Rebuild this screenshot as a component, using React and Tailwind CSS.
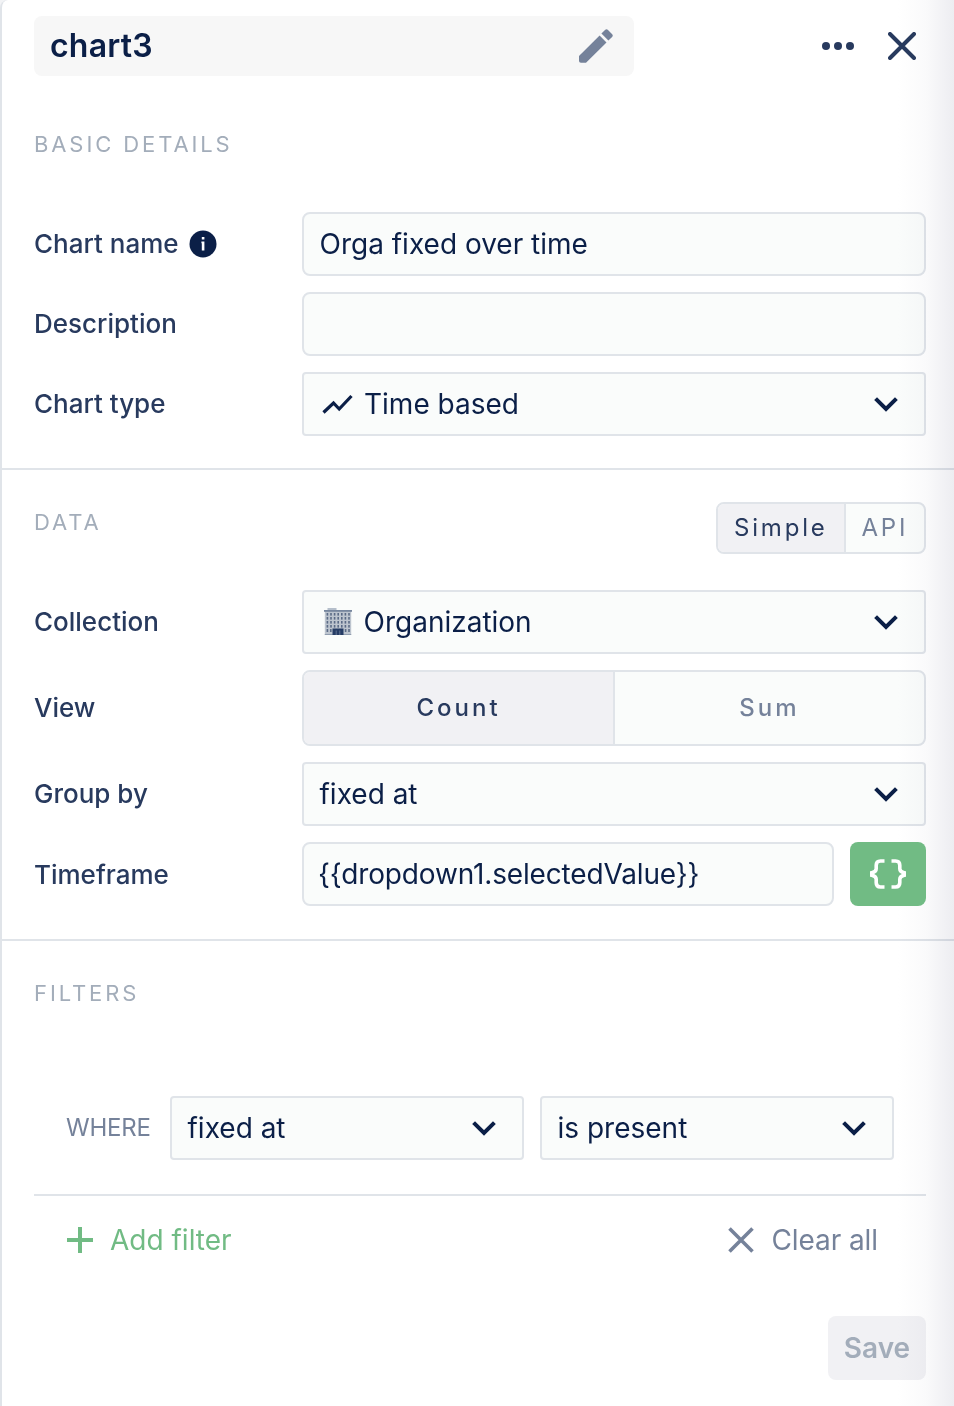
import React from "react";

const CONTROL = "border-2 border-[#e0e4e9] bg-[#fafcfb]";

function Chevron() {
  return (
    <svg className="h-[16px] w-[26px] shrink-0" viewBox="0 0 26 16" fill="none" stroke="#0b1f47" strokeWidth="4">
      <path d="M2.6 2.6 13 13 23.4 2.6" />
    </svg>
  );
}

function Select({ icon, children, className = "" }) {
  return (
    <div className={`flex h-16 items-center rounded-[4px] pl-[15.5px] pr-[25px] ${CONTROL} ${className}`}>
      {icon}
      <span className="flex-1 whitespace-nowrap">{children}</span>
      <Chevron />
    </div>
  );
}

function Row({ label, info, height = "h-16", labelClass = "pb-px", children }) {
  return (
    <div className={`flex items-center ${height}`}>
      <div className={`flex w-[268px] shrink-0 items-center text-[26px] font-medium text-[#283a5e] ${labelClass}`}>
        {label}
        {info}
      </div>
      <div className="flex flex-1 text-[28px] text-[#0b1f47]">{children}</div>
    </div>
  );
}

function Heading({ children }) {
  return <h2 className="h-[32px] text-[22px] leading-[32px] tracking-[2.9px] text-[#a3adba]">{children}</h2>;
}

function InfoIcon() {
  return (
    <svg className="relative top-[0.5px] ml-[10.5px] h-[28px] w-[28px]" viewBox="0 0 28 28">
      <circle cx="14" cy="14" r="13.5" fill="#0b1f47" />
      <path d="M12.8 7h2.6v2.4h-2.6zM12.4 11.6h3v9h-2.6v-7.4h-.4z" fill="#fff" />
    </svg>
  );
}

function TrendIcon() {
  return (
    <svg className="mr-[10px] ml-[2.5px] h-[20px] w-[32px]" viewBox="0 0 32 20" fill="none" stroke="#0b1f47" strokeWidth="3.2">
      <path d="M1.5 18.5 11.5 9 17.2 15 29.5 2" />
    </svg>
  );
}

function BuildingIcon() {
  const floors = [5, 9, 13, 17];
  const columns = [2.6, 6.2, 9.8, 13.4, 17, 20.6, 24.2];
  return (
    <svg className="mr-[11.5px] ml-[4.5px] h-[28px] w-[28px]" viewBox="0 0 28 28">
      <path d="M3.5 0h9v3h-9z" fill="#b5bfcb" />
      <path d="M.8 3h26.4v24H.8z" fill="#bcc4ce" />
      <path d="M0 2h28v1.8H0z" fill="#76869e" />
      <path d="M.8 26h26.4v1H.8z" fill="#909daf" />
      {floors.map((y) =>
        columns.map((x) => <rect key={`${x}-${y}`} x={x} y={y} width="1.6" height="2.6" fill="#5b6b86" />)
      )}
      <path d="M2.6 21h1.6v3H2.6zM24.2 21h1.6v3h-1.6zM6 21h1.6v3H6zM20.8 21h1.6v3h-1.6z" fill="#5b6b86" />
      <path d="M8.5 20.5h11v6.5h-11z" fill="#253c65" />
      <path d="M12.2 22.5v4.5M15.8 22.5v4.5" stroke="#71829e" strokeWidth=".8" />
    </svg>
  );
}

function BracesIcon() {
  return (
    <svg className="h-[32px] w-[38px]" viewBox="0 0 38 32" fill="none" stroke="#fff" strokeWidth="3.6">
      <path d="M15.5 3H11.5Q7.2 3 7.2 7.2V10.8Q7.2 13.8 2.8 14.8V17.2Q7.2 18.2 7.2 21.2V24.8Q7.2 29 11.5 29H15.5" />
      <path d="M22.5 3H26.5Q30.8 3 30.8 7.2V10.8Q30.8 13.8 35.2 14.8V17.2Q30.8 18.2 30.8 21.2V24.8Q30.8 29 26.5 29H22.5" />
    </svg>
  );
}

export default function App() {
  return (
    <div className="relative h-[1406px] w-[954px] overflow-hidden bg-[#f2f3f5] font-['Inter',sans-serif]">
      <div className="flex h-full flex-col rounded-tl-[8px] border-l-2 border-[#e0e4e9] bg-white">
        <header className="flex h-[76px] items-center pt-4 pr-[38px] pl-8">
          <div className="flex h-[60px] w-[600px] items-center justify-between rounded-[8px] bg-[#f7f7f7] pr-[21px] pl-4">
            <h1 className="text-[32px] font-semibold tracking-[0.2px] text-[#0b1f47]">chart3</h1>
            <svg className="h-[34px] w-[34px]" viewBox="0 0 34 34" fill="#75829a">
              <path d="M0 27 20.6 6.5 27.5 13.4 7 33.8H2Q0 33.8 0 32zM22.4 4.6 26 1Q27.5-.4 29 1L33.2 5.2Q34.4 6.6 33.1 8L29.4 11.6z" />
            </svg>
          </div>
          <svg className="ml-[188px] h-[8px] w-[32px]" viewBox="0 0 32 8" fill="#283a5e">
            <circle cx="4" cy="4" r="4" />
            <circle cx="16" cy="4" r="4" />
            <circle cx="28" cy="4" r="4" />
          </svg>
          <svg className="ml-[34px] h-[28px] w-[28px]" viewBox="0 0 28 28" stroke="#283a5e" strokeWidth="4" strokeLinecap="round">
            <path d="M2 2 26 26M26 2 2 26" />
          </svg>
        </header>

        <section className="flex h-[394px] flex-col border-b-2 border-[#e0e4e9] pt-[52px] pr-7 pl-8">
          <Heading>BASIC DETAILS</Heading>
          <div className="mt-[52px] flex flex-col gap-4">
            <Row label="Chart name" info={<InfoIcon />}>
              <div className={`flex h-16 flex-1 items-center rounded-[8px] pl-[15.5px] ${CONTROL}`}>Orga fixed over time</div>
            </Row>
            <Row label="Description">
              <div className={`h-16 flex-1 rounded-[8px] ${CONTROL}`} />
            </Row>
            <Row label="Chart type">
              <Select className="flex-1" icon={<TrendIcon />}>Time based</Select>
            </Row>
          </div>
        </section>

        <section className="flex h-[471px] flex-col border-b-2 border-[#e0e4e9] pt-8 pr-7 pl-8">
          <div className="flex h-[52px] items-start justify-between">
            <div className="pt-1">
              <Heading>DATA</Heading>
            </div>
            <div className={`flex h-[52px] w-[210px] overflow-hidden rounded-[8px] text-[24px] tracking-[2.8px] ${CONTROL}`}>
              <div className="flex w-[128px] items-center border-r-2 border-[#e0e4e9] bg-[#f1f1f4] pl-4 text-[#283a5e]">Simple</div>
              <div className="flex items-center pl-[15.5px] text-[#75829a]">API</div>
            </div>
          </div>
          <div className="mt-9 flex flex-col gap-4">
            <Row label="Collection">
              <Select className="flex-1" icon={<BuildingIcon />}>Organization</Select>
            </Row>
            <Row label="View" height="h-[76px]">
              <div className={`flex h-[76px] flex-1 overflow-hidden rounded-[8px] text-[24px] font-medium tracking-[3px] ${CONTROL}`}>
                <div className="flex w-[311px] items-center justify-center border-r-2 border-[#e0e4e9] bg-[#f1f1f4] text-[#283a5e]">Count</div>
                <div className="flex flex-1 items-center justify-center text-[#75829a]">Sum</div>
              </div>
            </Row>
            <Row label="Group by">
              <Select className="flex-1">fixed at</Select>
            </Row>
            <Row label="Timeframe" labelClass="pt-px">
              <div className={`flex h-16 w-[532px] items-center rounded-[8px] pl-[14px] tracking-[-0.15px] ${CONTROL}`}>{"{{dropdown1.selectedValue}}"}</div>
              <div className="relative z-10 ml-4 flex h-16 w-[76px] items-center justify-center rounded-[8px] bg-[#71bb84]">
                <BracesIcon />
              </div>
            </Row>
          </div>
        </section>

        <section className="flex flex-col pt-[36px] pr-7 pl-8">
          <Heading>FILTERS</Heading>
          <div className="mt-[87px] flex h-[100px] items-start border-b-2 border-[#e0e4e9] pr-8 pl-8 text-[28px] text-[#0b1f47]">
            <div className="flex h-16 w-[104px] items-center text-[24px] tracking-[-0.2px] text-[#75829a]">WHERE</div>
            <Select className="w-[354px]">fixed at</Select>
            <Select className="ml-4 w-[354px]">is present</Select>
          </div>
          <div className="flex h-[88px] items-center justify-between pr-[48px] pl-[33px] text-[28px]">
            <div className="flex items-center gap-[17px] text-[#71bb84]">
              <svg className="h-[26px] w-[26px]" viewBox="0 0 26 26" stroke="currentColor" strokeWidth="4">
                <path d="M13 0v26M0 13h26" />
              </svg>
              Add filter
            </div>
            <div className="flex items-center gap-[17px] tracking-[-0.08px] text-[#75829a]">
              <svg className="h-[26px] w-[26px]" viewBox="0 0 26 26" stroke="currentColor" strokeWidth="3.6">
                <path d="M1.5 1.5 24.5 24.5M24.5 1.5 1.5 24.5" />
              </svg>
              Clear all
            </div>
          </div>
          <div className="mt-8 flex h-16 w-[98px] items-center justify-center self-end rounded-[8px] bg-[#f1f1f4] text-[28px] font-semibold text-[#a3adba]">Save</div>
        </section>
      </div>
      <div className="pointer-events-none absolute inset-y-0 right-0 w-[56px] bg-linear-to-r from-white via-[#fafafb] to-[#ededf1] mix-blend-multiply" />
    </div>
  );
}
